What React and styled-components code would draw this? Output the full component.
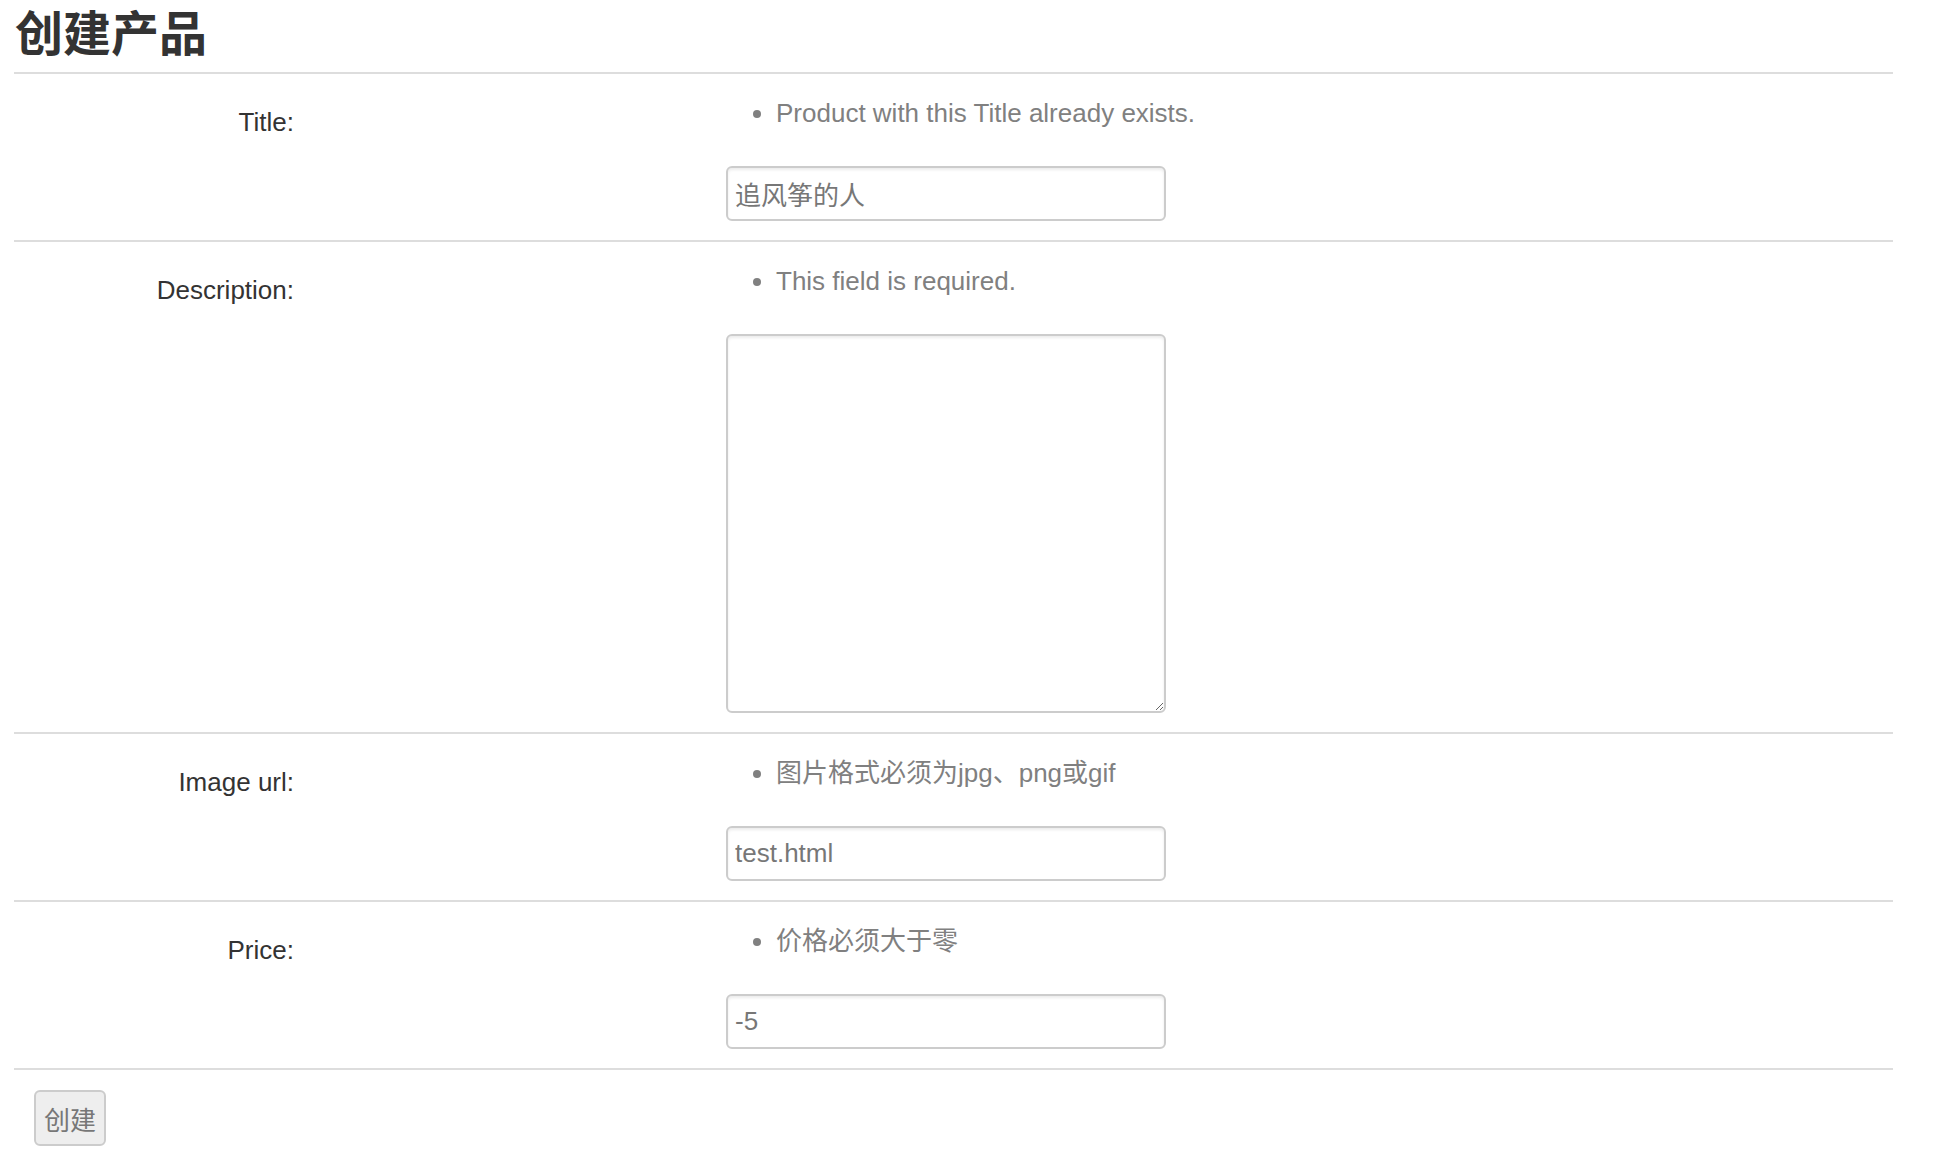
import React from "react";
import styled, { createGlobalStyle } from "styled-components";

const GlobalStyle = createGlobalStyle`
  body {
    margin: 0;
    background: #fff;
    font-family: "Liberation Sans", "Noto Sans CJK SC", sans-serif;
    color: #333;
  }
`;

const fontStack = `"Liberation Sans", "Noto Sans CJK SC", sans-serif`;

const Page = styled.div`
  width: 1879px;
  margin-left: 14px;
`;

const Heading = styled.h1`
  margin: 0;
  padding: 5px 0 7px 1px;
  font-size: 48px;
  line-height: 60px;
  font-weight: bold;
  color: #333;
  border-bottom: 2px solid #ddd;
`;

const Row = styled.div`
  display: grid;
  grid-template-columns: 280px 1fr;
  column-gap: 432px;
  padding: 21px 0 19px;
  border-bottom: 2px solid #ddd;
`;

const Label = styled.label`
  text-align: right;
  font-size: 26px;
  line-height: 36px;
  padding-top: 9px;
  color: #333;
`;

const Field = styled.div`
  display: flex;
  flex-direction: column;
  align-items: flex-start;
`;

const Errors = styled.ul`
  margin: 0 0 35px;
  padding-left: 50px;
  list-style: disc;
  color: #808080;
  font-size: 26px;
  line-height: 36px;
`;

const inputBase = `
  box-sizing: border-box;
  width: 440px;
  border: 2px solid #ccc;
  border-radius: 6px;
  box-shadow: inset 0 2px 3px rgba(0, 0, 0, 0.08);
  font-family: ${fontStack};
  font-size: 26px;
  color: #777;
  background: #fff;
  outline: none;
`;

const TextInput = styled.input`
  ${inputBase}
  height: 55px;
  padding: 0 7px;
`;

const TextArea = styled.textarea`
  ${inputBase}
  height: 379px;
  padding: 7px;
  resize: both;
  display: block;
`;

const Actions = styled.div`
  padding: 20px 0 0 20px;
`;

const Button = styled.button`
  height: 56px;
  padding: 0 8px;
  border: 2px solid #ccc;
  border-radius: 6px;
  background: #eee;
  color: #777;
  font-family: ${fontStack};
  font-size: 26px;
  cursor: pointer;
`;

const fields = [
  { label: "Title:", error: "Product with this Title already exists.", value: "追风筝的人" },
  { label: "Description:", error: "This field is required.", multiline: true },
  { label: "Image url:", error: "图片格式必须为jpg、png或gif", value: "test.html" },
  { label: "Price:", error: "价格必须大于零", value: "-5" },
];

export default function App() {
  return (
    <Page>
      <GlobalStyle />
      <Heading>创建产品</Heading>
      <form onSubmit={e => e.preventDefault()}>
        {fields.map(f => (
          <Row key={f.label}>
            <Label>{f.label}</Label>
            <Field>
              <Errors>
                <li>{f.error}</li>
              </Errors>
              {f.multiline ? (
                <TextArea defaultValue="" />
              ) : (
                <TextInput type="text" defaultValue={f.value} />
              )}
            </Field>
          </Row>
        ))}
        <Actions>
          <Button type="submit">创建</Button>
        </Actions>
      </form>
    </Page>
  );
}
